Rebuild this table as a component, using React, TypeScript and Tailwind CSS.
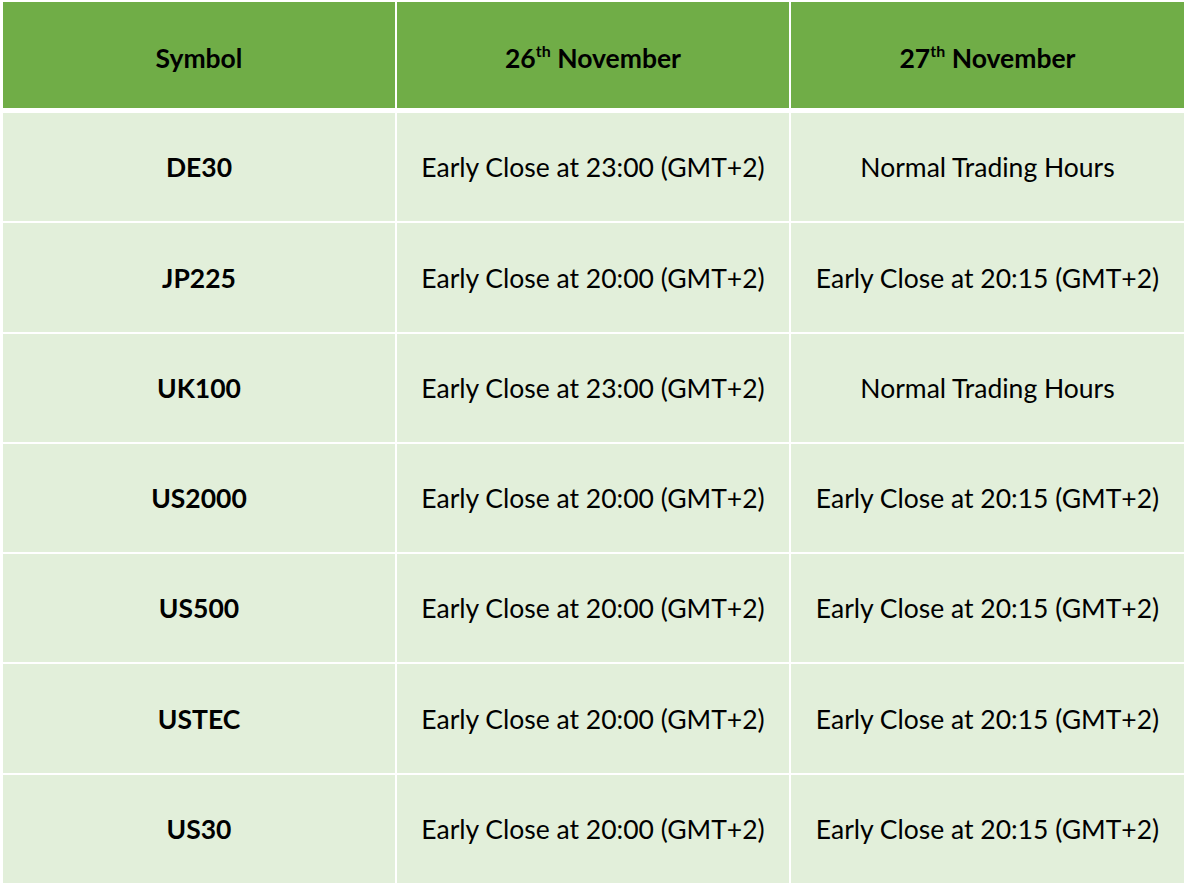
const rows: { symbol: string; nov26: string; nov27: string }[] = [
  { symbol: "DE30", nov26: "Early Close at 23:00 (GMT+2)", nov27: "Normal Trading Hours" },
  { symbol: "JP225", nov26: "Early Close at 20:00 (GMT+2)", nov27: "Early Close at 20:15 (GMT+2)" },
  { symbol: "UK100", nov26: "Early Close at 23:00 (GMT+2)", nov27: "Normal Trading Hours" },
  { symbol: "US2000", nov26: "Early Close at 20:00 (GMT+2)", nov27: "Early Close at 20:15 (GMT+2)" },
  { symbol: "US500", nov26: "Early Close at 20:00 (GMT+2)", nov27: "Early Close at 20:15 (GMT+2)" },
  { symbol: "USTEC", nov26: "Early Close at 20:00 (GMT+2)", nov27: "Early Close at 20:15 (GMT+2)" },
  { symbol: "US30", nov26: "Early Close at 20:00 (GMT+2)", nov27: "Early Close at 20:15 (GMT+2)" },
];

function HeaderCell({ children }: { children: React.ReactNode }) {
  return (
    <div className="flex h-[106px] items-center justify-center bg-[#70ad47] pt-[7px] text-[26.5px] font-bold text-black">
      <span>{children}</span>
    </div>
  );
}

function Cell({ children, bold }: { children: React.ReactNode; bold?: boolean }) {
  return (
    <div
      className={
        "flex h-[108.3px] items-center justify-center bg-[#e2efda] pt-[2px] text-[26.5px] text-black " +
        (bold ? "font-bold" : "")
      }
    >
      {children}
    </div>
  );
}

export default function App() {
  return (
    <div className="min-h-[887px] w-[1189px] bg-white pl-[3px] pt-[2px] font-['Lato',sans-serif]">
      <div className="w-[1181px]">
        <div className="grid grid-cols-[392px_392px_393px] gap-x-[2px]">
          <HeaderCell>Symbol</HeaderCell>
          <HeaderCell>
            26<sup className="relative -top-[11px] text-[16px]">th</sup> November
          </HeaderCell>
          <HeaderCell>
            27<sup className="relative -top-[11px] text-[16px]">th</sup> November
          </HeaderCell>
        </div>
        <div className="mt-[5px] grid grid-cols-[392px_392px_393px] gap-[2px]">
          {rows.map((r) => (
            <div key={r.symbol} className="contents">
              <Cell bold>{r.symbol}</Cell>
              <Cell>{r.nov26}</Cell>
              <Cell>{r.nov27}</Cell>
            </div>
          ))}
        </div>
      </div>
    </div>
  );
}
